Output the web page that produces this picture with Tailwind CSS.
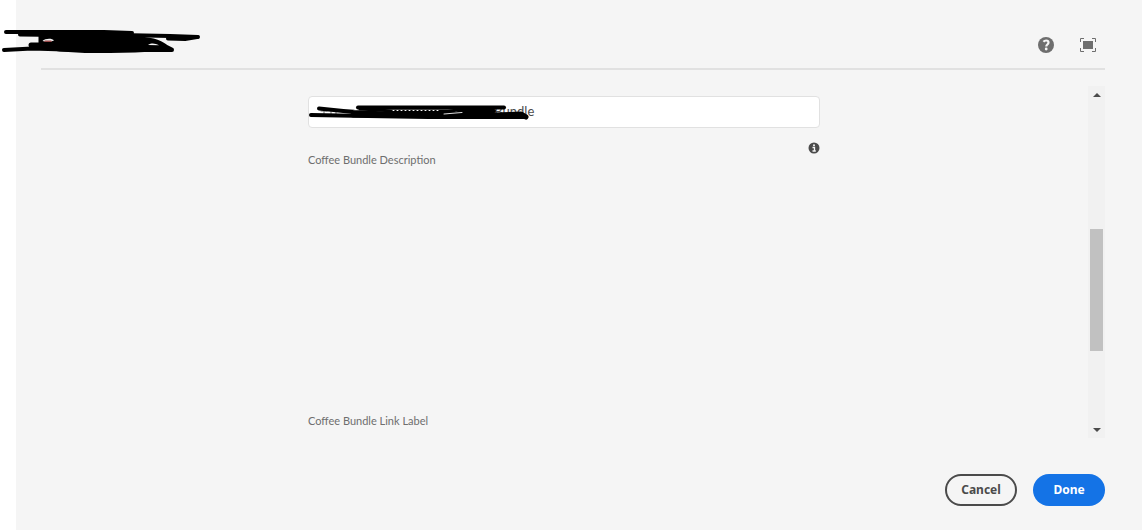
<!DOCTYPE html>
<html lang="en" class="h-full">
<head>
<meta charset="UTF-8">
<meta name="viewport" content="width=device-width, initial-scale=1.0">
<title>Coffee Bundle</title>
<script src="https://cdn.jsdelivr.net/npm/@tailwindcss/browser@4"></script>
</head>
<body class="h-full bg-white pl-4 font-['Noto_Sans',sans-serif] text-[#4b4b4b]">

<form class="relative flex min-h-full flex-col bg-[#f5f5f5] pr-[37px] pb-6 pl-[25px]">
  <header class="flex h-[70px] items-center justify-end gap-[26px] border-b-2 border-[#e1e1e1] pt-[22px] pr-[9px]">
    <button type="button" aria-label="Help" class="size-4">
      <svg viewBox="0 0 16 16" class="size-4">
        <circle cx="8" cy="8" r="8" fill="#6e6e6e"/>
        <path d="M5.400 4.800C6.200 3.900 7 3.500 8.100 3.500c1.500 0 2.400.8 2.400 2 0 1.900-2.200 2-2.200 3.900" fill="none" stroke="#f5f5f5" stroke-width="2.200"/>
        <circle cx="8.200" cy="12" r="1.400" fill="#f5f5f5"/>
      </svg>
    </button>
    <button type="button" aria-label="Toggle fullscreen" class="size-4">
      <svg viewBox="0 0 16 16" class="size-4">
        <path d="M4 1.500H.5V5M12 1.500h3.500V5M4 14.500H.5V11M12 14.500h3.500V11" fill="none" stroke="#6e6e6e"/>
        <rect x="3" y="4" width="10" height="8" fill="#6e6e6e"/>
      </svg>
    </button>
  </header>

  <!-- marker strokes over the title -->
  <svg viewBox="0 0 204 60" class="absolute top-0 -left-4 h-[60px] w-[204px]" fill="none" stroke="#000" stroke-linecap="round" stroke-linejoin="round" aria-hidden="true">
    <path d="M6 32H104L132 33" stroke-width="4"/>
    <path d="M20 34.500L60 35L120 35L170 36L198 37" stroke-width="4"/>
    <path d="M168 38.500L185 39L197 37" stroke-width="4"/>
    <path d="M4 50L32 48.500L80 50L130 50L172 50" stroke-width="4"/>
    <path d="M31 45H42" stroke-width="5"/>
    <path d="M40 35L120 34L134 38C148 38 160 41 166 46L172 49L135 51L110 51.500L85 51.500L60 50L40 47Z" fill="#000" stroke-width="3"/>
    <path d="M42.500 41C45 38.500 52 38 54 40.500L51 41.500H45Z" fill="#f5f5f5" stroke="none"/>
    <path d="M45 41.200H51" stroke="#9a4a4a" stroke-width="1.500"/>
    <path d="M148 45C152 42.500 155 43.500 159 45.300Z" fill="#f5f5f5" stroke="none"/>
  </svg>

  <div class="mt-4 flex flex-1">
    <div class="flex-1 pr-px">
      <div class="mx-auto w-full max-w-lg pt-[10px]">
        <div class="relative">
          <input type="text" aria-label="Coffee Bundle Title" value="Coffee Bundle" class="block h-8 w-full rounded border border-[#e1e1e1] bg-white pb-0.5 pl-36 font-[Lato,sans-serif] text-[13px] text-[#4b4b4b] outline-none">
          <svg viewBox="0 0 230 32" class="pointer-events-none absolute top-0 left-0 h-8 w-[230px]" fill="none" stroke="#000" stroke-linecap="round" stroke-linejoin="round" aria-hidden="true">
            <path d="M13 15H19M16 15V19M23 14V19M28 16V19M35 14H46" stroke="#6e6e6e" stroke-width="1"/>
            <path d="M11 12.500L45 16L90 18L150 18L185 18" stroke-width="4"/>
            <path d="M3 19L60 20L120 21L170 21L218 21" stroke-width="4"/>
            <path d="M50 11.500H110L196 11.500" stroke-width="4"/>
            <path d="M52 13L85 15L140 15L175 12" stroke-width="3"/>
            <path d="M45 19L140 19L185 19L213 18L218 21" stroke-width="5"/>
            <path d="M150 14H166L186 15" stroke-width="4"/>
            <path d="M85 14.500H130" stroke="#fff" stroke-width="1" stroke-dasharray="1 3"/>
            <path d="M136 18L154 16.500" stroke="#ddd" stroke-width="1"/>
          </svg>
        </div>
        <div class="mt-[14px] flex justify-between">
          <label for="description" class="pt-[10px] font-[Lato,sans-serif] text-[11px] leading-4 text-[#6e6e6e]">Coffee Bundle Description</label>
          <button type="button" aria-label="Description info" class="size-3">
            <svg viewBox="0 0 12 12" class="size-3">
              <circle cx="6" cy="6" r="5.500" fill="#4b4b4b"/>
              <path d="M4.500 5.500H6.500V9M4.500 9H7.800" fill="none" stroke="#f5f5f5" stroke-width="1.300"/>
              <circle cx="6" cy="3.200" r="1" fill="#f5f5f5"/>
            </svg>
          </button>
        </div>
        <textarea id="description" class="block h-[245px] w-full resize-none bg-transparent outline-none"></textarea>
        <p class="font-[Lato,sans-serif] text-[11px] leading-4 text-[#6e6e6e]">Coffee Bundle Link Label</p>
      </div>
    </div>

    <div class="flex w-[17px] flex-col items-center bg-[#f1f1f1]">
      <button type="button" aria-label="Scroll up" class="flex h-[17px] w-full items-center justify-center">
        <svg viewBox="0 0 8 4" class="h-1 w-2" fill="#4b4b4b"><path d="M0 4L4 0L8 4Z"/></svg>
      </button>
      <div class="w-full flex-[126]"></div>
      <div class="w-[13px] flex-[122] bg-[#c1c1c1]"></div>
      <div class="w-full flex-[70]"></div>
      <button type="button" aria-label="Scroll down" class="flex h-[17px] w-full items-center justify-center">
        <svg viewBox="0 0 8 4" class="h-1 w-2" fill="#4b4b4b"><path d="M0 0L4 4L8 0Z"/></svg>
      </button>
    </div>
  </div>

  <footer class="mt-9 flex justify-end gap-4">
    <button type="button" class="h-8 w-[72px] rounded-full border-2 border-[#4b4b4b] text-[12px] font-bold text-[#4b4b4b]">Cancel</button>
    <button type="submit" class="h-8 w-[72px] rounded-full bg-[#1473e6] text-[12px] font-bold text-white">Done</button>
  </footer>
</form>

</body>
</html>
